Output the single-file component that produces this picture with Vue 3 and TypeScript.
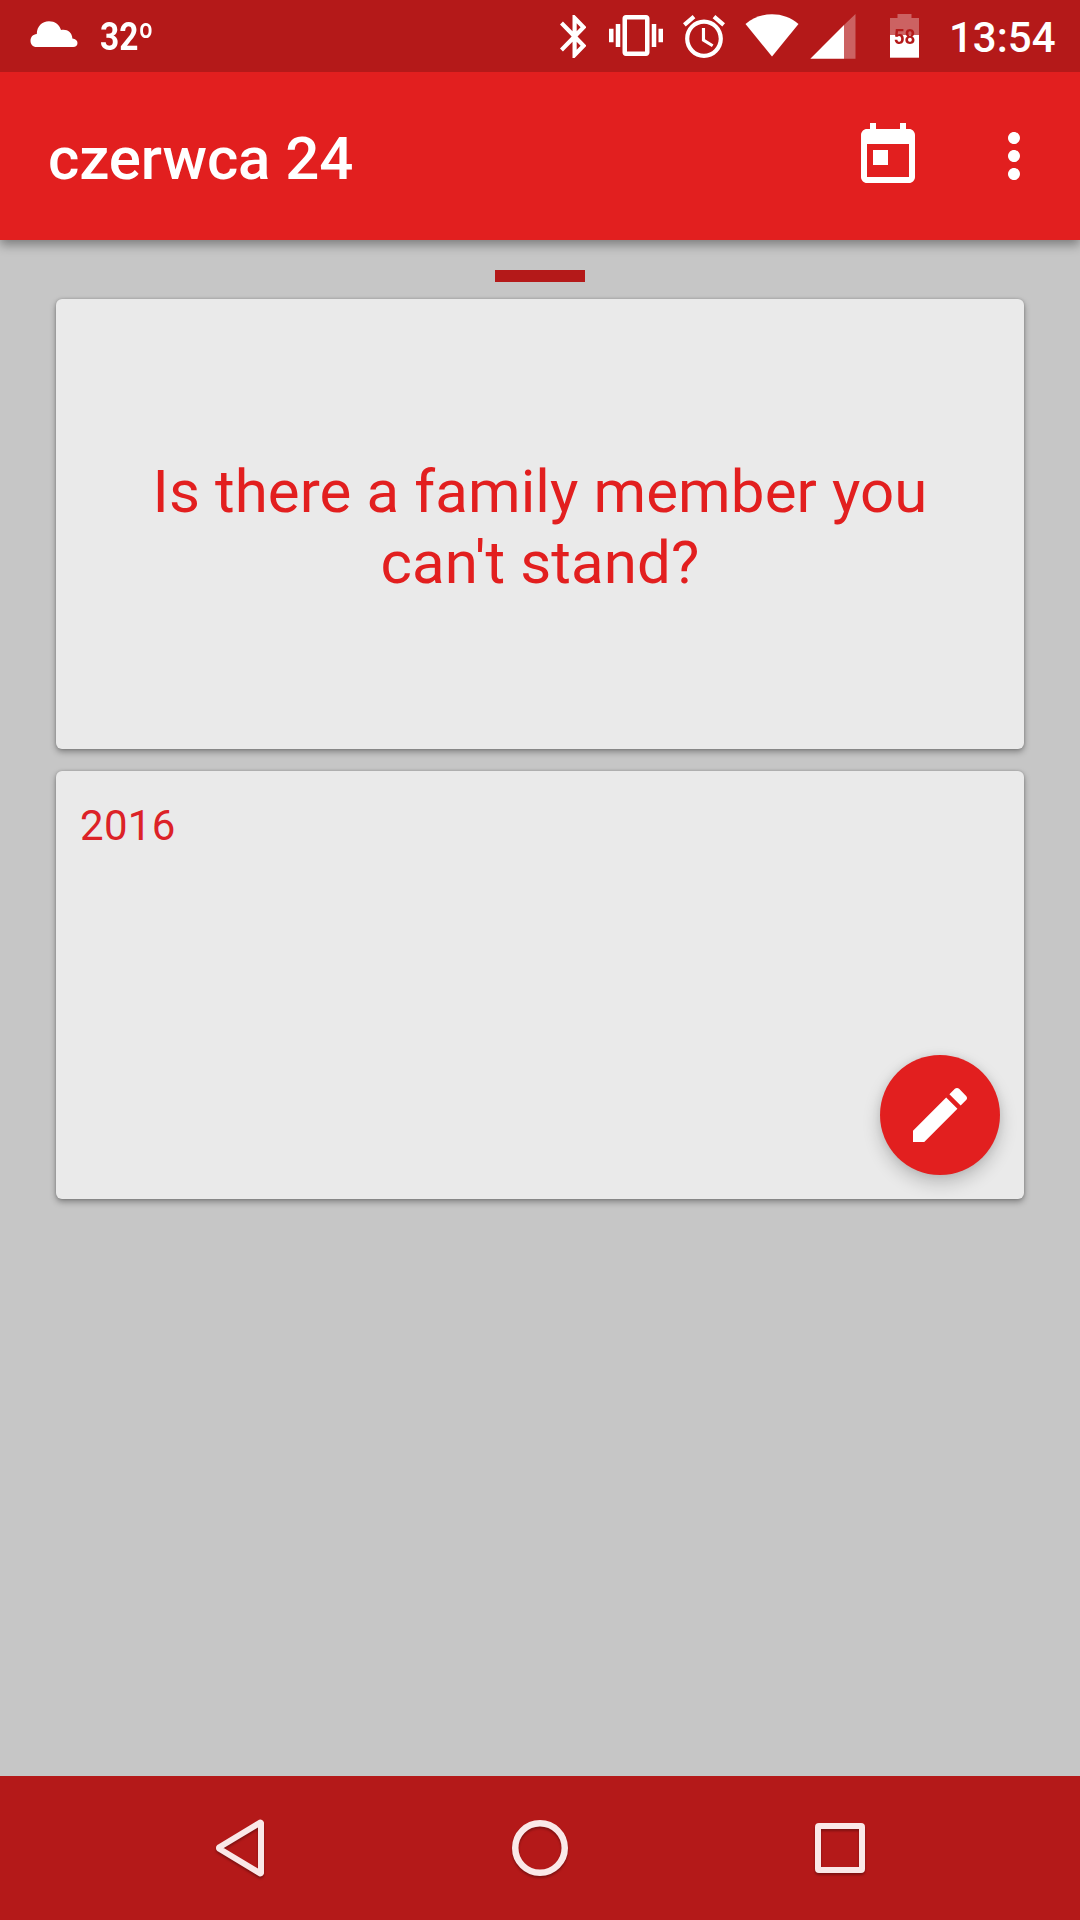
<script setup lang="ts">
const temperature = '32º'
const clock = '13:54'
const batteryLevel = 58
const title = 'czerwca 24'
const question = "Is there a family member you can't stand?"
const year = '2016'
</script>

<template>
  <div class="screen">
    <div class="status-bar">
      <svg class="cloud" width="48" height="27" viewBox="0 0 48 27">
        <path fill="#fff" d="M6.500 26C2.800 26 .5 23.300 .5 19.700S3 13.300 6.800 13C6.800 5.500 12 .3 19 .3c5.800 0 10.300 3.300 12 8.700 6-1.300 11 2.300 11.400 8.400 3 .3 5.100 2 5.100 4.500 0 2.400-1.800 4.100-4.300 4.100z" />
      </svg>
      <span class="temperature">{{ temperature }}</span>
      <div class="indicators">
        <svg class="bluetooth" width="26.500" height="43" viewBox="5 2 12.710 20" preserveAspectRatio="none">
          <path fill="#fff" d="M17.710 7.710L12 2h-1v7.590L6.410 5 5 6.410 10.590 12 5 17.590 6.410 19 11 14.410V22h1l5.710-5.710-4.300-4.290 4.300-4.290zM13 5.830l1.880 1.880L13 9.590V5.830zm1.880 10.460L13 18.170v-3.760l1.880 1.880z" />
        </svg>
        <svg class="vibrate" width="54" height="41" viewBox="0 3 24 18" preserveAspectRatio="none">
          <path fill="#fff" d="M0 15h2V9H0v6zm3 2h2V7H3v10zm19-8v6h2V9h-2zm-3 8h2V7h-2v10zM16.500 3h-9C6.670 3 6 3.670 6 4.500v15c0 .83.67 1.500 1.500 1.500h9c.83 0 1.500-.67 1.500-1.500v-15c0-.83-.67-1.500-1.500-1.500zM16 19H8V5h8v14z" />
        </svg>
        <svg class="alarm" width="42" height="43" viewBox="2 1.860 20 20.140" preserveAspectRatio="none">
          <path fill="#fff" d="M22 5.720l-4.600-3.860-1.290 1.530 4.600 3.860L22 5.720zM7.880 3.390L6.600 1.860 2 5.710l1.290 1.530 4.590-3.850zM12.500 8H11v6l4.750 2.850.75-1.230-4-2.370V8zM12 4c-4.970 0-9 4.030-9 9s4.020 9 9 9c4.970 0 9-4.030 9-9s-4.030-9-9-9zm0 16c-3.870 0-7-3.130-7-7s3.130-7 7-7 7 3.130 7 7-3.130 7-7 7z" />
        </svg>
        <svg class="wifi" width="54" height="43" viewBox="0 0 54 43">
          <path fill="#fff" d="M.5 10C8 3.500 17 .2 27 .2S46 3.500 53.500 10L27 42.500z" />
        </svg>
        <svg class="signal" width="46" height="45" viewBox="0 0 46 45">
          <path fill="#fff" fill-opacity=".32" d="M45.500 0v44.700H34V11z" />
          <path fill="#fff" d="M.3 44.700L34 11v33.700z" />
        </svg>
        <div class="battery">
          <svg width="29" height="44" viewBox="0 0 29 44">
            <path fill="#fff" fill-opacity=".32" d="M7.500 0h14v4H29v17H0V4h7.500z" />
            <path fill="#fff" d="M0 21h29v22.700H0z" />
          </svg>
          <span class="battery-level">{{ batteryLevel }}</span>
        </div>
        <span class="clock">{{ clock }}</span>
      </div>
    </div>

    <header class="toolbar">
      <h1 class="title">{{ title }}</h1>
      <svg class="today" width="72" height="72" viewBox="0 0 24 24">
        <path fill="#fff" d="M19 3h-1V1h-2v2H8V1H6v2H5c-1.110 0-1.990.9-1.990 2L3 19c0 1.100.89 2 2 2h14c1.100 0 2-.9 2-2V5c0-1.100-.9-2-2-2zm0 16H5V8h14v11zM7 10h5v5H7z" />
      </svg>
      <svg class="more" width="72" height="72" viewBox="0 0 24 24">
        <path fill="#fff" d="M12 8c1.100 0 2-.9 2-2s-.9-2-2-2-2 .9-2 2 .9 2 2 2zm0 2c-1.100 0-2 .9-2 2s.9 2 2 2 2-.9 2-2-.9-2-2-2zm0 6c-1.100 0-2 .9-2 2s.9 2 2 2 2-.9 2-2-.9-2-2-2z" />
      </svg>
    </header>

    <main class="content">
      <div class="handle"></div>
      <section class="card question-card">
        <p class="question">{{ question }}</p>
      </section>
      <section class="card answer-card">
        <span class="year">{{ year }}</span>
        <button class="fab" aria-label="Edit">
          <svg width="72" height="72" viewBox="0 0 24 24">
            <path fill="#fff" d="M3 17.250V21h3.750L17.810 9.940l-3.750-3.750L3 17.250zM20.710 7.040c.39-.39.39-1.020 0-1.410l-2.340-2.340c-.39-.39-1.020-.39-1.410 0l-1.830 1.830 3.750 3.750 1.830-1.830z" />
          </svg>
        </button>
      </section>
    </main>

    <nav class="nav-bar">
      <svg width="60" height="60" viewBox="0 0 60 60">
        <path fill="none" stroke="#fae8e8" stroke-width="6" stroke-linejoin="round" d="M51 5v50a.6.6 0 0 1-.8.400L9.300 30.800a1 1 0 0 1 0-1.600L50.200 4.600a.6.6 0 0 1 .8.400z" />
      </svg>
      <svg width="60" height="60" viewBox="0 0 60 60">
        <circle cx="30" cy="30" r="24.750" fill="none" stroke="#fae8e8" stroke-width="6.500" />
      </svg>
      <svg width="60" height="60" viewBox="0 0 60 60">
        <path fill="#fae8e8" fill-rule="evenodd" d="M9 5h42a4 4 0 0 1 4 4v42a4 4 0 0 1-4 4H9a4 4 0 0 1-4-4V9a4 4 0 0 1 4-4zM11 11v38h38V11z" />
      </svg>
    </nav>
  </div>
</template>

<style>
body {
  margin: 0;
}
</style>

<style scoped>
.screen {
  width: 1080px;
  height: 1920px;
  display: flex;
  flex-direction: column;
  overflow: hidden;
  background: #c6c6c6;
  font-family: Roboto, "Noto Sans", sans-serif;
}

svg {
  display: block;
  flex: none;
}

.status-bar {
  z-index: 2;
  height: 72px;
  flex: none;
  display: flex;
  align-items: flex-start;
  background: #b41919;
  color: #fff;
}

.cloud {
  margin: 21px 0 0 30px;
}

.temperature {
  margin: 14px 0 0 22px;
  font-size: 38px;
  line-height: 46px;
  font-weight: 700;
  transform: scaleX(0.88);
  transform-origin: left;
}

.indicators {
  margin-left: auto;
  margin-right: 24px;
  display: flex;
  align-items: flex-start;
}

.bluetooth {
  margin-top: 15px;
}

.vibrate {
  margin: 15px 0 0 22.5px;
}

.alarm {
  margin: 15px 0 0 20.5px;
}

.wifi {
  margin: 14px 0 0 20px;
}

.signal {
  margin: 14px 0 0 11px;
}

.battery {
  position: relative;
  width: 29px;
  margin: 14px 0 0 34px;
}

.battery-level {
  position: absolute;
  top: 11px;
  left: 0;
  width: 29px;
  text-align: center;
  font-size: 21px;
  line-height: 24px;
  font-weight: 700;
  transform: scaleX(0.9);
  color: #b41919;
}

.clock {
  margin: 13px 0 0 30px;
  width: 107px;
  font-size: 42px;
  line-height: 49px;
  font-weight: 500;
  white-space: nowrap;
}

.toolbar {
  z-index: 1;
  height: 168px;
  flex: none;
  display: flex;
  align-items: center;
  background: #e21f1f;
  box-shadow: 0 5px 10px rgba(0, 0, 0, 0.36);
}

.title {
  margin: 6px auto 0 48px;
  font-size: 60px;
  line-height: 70px;
  font-weight: 500;
  letter-spacing: -0.1px;
  color: #fff;
}

.more {
  margin: 0 30px 0 54px;
}

.content {
  flex: 1;
  display: flex;
  flex-direction: column;
  align-items: center;
}

.handle {
  width: 90px;
  height: 12px;
  margin: 30px 0 17px;
  background: #b41919;
}

.card {
  width: 968px;
  box-sizing: border-box;
  border-radius: 6px;
  background: #eaeaea;
  box-shadow: 0 3px 6px rgba(0, 0, 0, 0.34), 0 0 3px rgba(0, 0, 0, 0.2);
}

.question-card {
  height: 450px;
  display: flex;
  align-items: center;
  justify-content: center;
  padding: 6px 72px 0;
}

.question {
  margin: 0;
  text-align: center;
  font-size: 60px;
  line-height: 71px;
  letter-spacing: 0.1px;
  color: #e21f1f;
}

.answer-card {
  position: relative;
  height: 428px;
  margin-top: 22px;
  padding: 30px 24px;
}

.year {
  display: block;
  font-size: 42px;
  line-height: 49px;
  letter-spacing: 0.3px;
  color: #dc2227;
}

.fab {
  position: absolute;
  right: 24px;
  bottom: 24px;
  width: 120px;
  height: 120px;
  padding: 0;
  border: 0;
  border-radius: 50%;
  display: flex;
  align-items: center;
  justify-content: center;
  background: #e21f1f;
  box-shadow: 0 8px 18px rgba(0, 0, 0, 0.2), 0 0 8px rgba(0, 0, 0, 0.08);
}

.nav-bar {
  height: 144px;
  flex: none;
  display: flex;
  align-items: center;
  justify-content: center;
  gap: 240px;
  background: #b41919;
}

.nav-bar svg {
  filter: drop-shadow(0 2px 1px rgba(0, 0, 0, 0.3));
}
</style>
